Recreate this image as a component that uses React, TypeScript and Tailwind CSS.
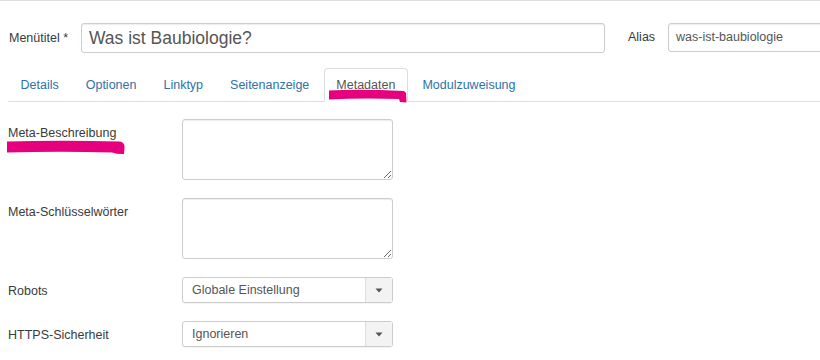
import React from "react";

const tabs = ["Details", "Optionen", "Linktyp", "Seitenanzeige", "Metadaten", "Modulzuweisung"];

function Caret() {
  return (
    <svg width="8" height="5" viewBox="0 0 8 5">
      <path d="M0.5 0.5 L7.5 0.5 L4 4.5 Z" fill="#555" />
    </svg>
  );
}

function Select({ value }: { value: string }) {
  return (
    <div className="flex h-[26px] w-[211px] rounded-[3px] border border-[#ccc] bg-white shadow-[0_1px_1px_rgba(0,0,0,0.05)]">
      <div className="flex flex-1 items-center pl-[9px] text-[12.5px] text-[#555]">{value}</div>
      <div className="flex w-[27px] items-center justify-center border-l border-[#ddd] bg-[#f3f3f3]">
        <Caret />
      </div>
    </div>
  );
}

function Row({ label, children }: { label: string; children: React.ReactNode }) {
  return (
    <div className="mb-[18px] flex">
      <div className="w-[174px] shrink-0 pt-[7px] text-[12.5px] leading-[15px] text-[#3a3a3a]">{label}</div>
      {children}
    </div>
  );
}

function Area() {
  return (
    <textarea
      className="h-[61px] w-[211px] rounded-[3px] border border-[#ccc] bg-white shadow-[inset_0_1px_1px_rgba(0,0,0,0.075)] outline-none"
      defaultValue=""
    />
  );
}

export default function App() {
  return (
    <div
      className="relative h-[360px] w-[820px] overflow-hidden border-t border-[#ddd] bg-white"
      style={{ fontFamily: '"Liberation Sans", Arial, sans-serif' }}
    >
      <div className="flex items-start pl-[9px] pt-[22px]">
        <div className="flex h-[30px] w-[72px] shrink-0 items-center text-[12.5px] text-[#3a3a3a]">Menütitel *</div>
        <div className="flex h-[30px] w-[524px] shrink-0 items-center rounded-[3px] border border-[#ccc] pl-[7px] text-[17.5px] text-[#555] shadow-[inset_0_1px_1px_rgba(0,0,0,0.075)]">
          Was ist Baubiologie?
        </div>
        <div className="ml-[23px] flex h-[29px] w-[40px] shrink-0 items-center text-[12.5px] text-[#3a3a3a]">Alias</div>
        <div className="flex h-[29px] w-[220px] shrink-0 items-center rounded-[3px] border border-[#ccc] pl-[7px] text-[12.5px] text-[#555] shadow-[inset_0_1px_1px_rgba(0,0,0,0.075)]">
          was-ist-baubiologie
        </div>
      </div>

      <div className="ml-[8px] mt-[15px] flex border-b border-[#ddd]">
        {tabs.map((t) => {
          const active = t === "Metadaten";
          return (
            <div
              key={t}
              className={
                active
                  ? "-mb-px mr-[2px] flex h-[34px] shrink-0 items-center rounded-t-[4px] border border-[#ddd] border-b-white bg-white px-[11.5px] text-[12.5px] text-[#555]"
                  : "-mb-px mr-[2px] flex h-[34px] shrink-0 items-center rounded-t-[4px] border border-transparent px-[11.5px] text-[12.5px] text-[#3071a9]"
              }
            >
              {t}
            </div>
          );
        })}
      </div>

      <div className="pl-[8px] pt-[17px]">
        <Row label="Meta-Beschreibung">
          <Area />
        </Row>
        <Row label="Meta-Schlüsselwörter">
          <Area />
        </Row>
        <Row label="Robots">
          <Select value="Globale Einstellung" />
        </Row>
        <Row label="HTTPS-Sicherheit">
          <Select value="Ignorieren" />
        </Row>
      </div>

      <svg className="pointer-events-none absolute left-0 top-0" width="820" height="360" viewBox="0 0 820 360">
        <path
          d="M329 89.5 Q360 88 404 90 L406 92 L406.5 101.5 L400 101 L399 98 Q360 97 329 98.5 Z"
          fill="#e6007e"
        />
        <path
          d="M7 140.5 Q60 139 120 140.5 Q125 141.5 124.5 147 L124 153 Q118 153.5 112 151.5 Q60 150 7 151.5 Z"
          fill="#e6007e"
        />
      </svg>
    </div>
  );
}
